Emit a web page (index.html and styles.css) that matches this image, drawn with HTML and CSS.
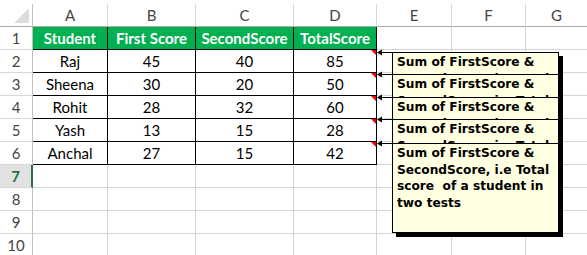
FILE: index.html
```html
<!DOCTYPE html>
<html>
<head>
<meta charset="utf-8">
<link rel="stylesheet" href="styles.css">
</head>
<body>
<div class="page">
  <div class="sheet">
    <div class="corner"><svg width="16" height="16" viewBox="0 0 16 16"><polygon points="16,0 16,16 0,16" fill="#dcdcdc"/></svg></div>
    <div class="colhead">A</div>
    <div class="colhead">B</div>
    <div class="colhead">C</div>
    <div class="colhead">D</div>
    <div class="colhead">E</div>
    <div class="colhead">F</div>
    <div class="colhead last">G</div>

    <div class="rowhead">1</div>
    <div class="cell t th">Student</div>
    <div class="cell t th">First Score</div>
    <div class="cell t th">SecondScore</div>
    <div class="cell t th">TotalScore</div>
    <div class="cell"></div><div class="cell"></div><div class="cell last"></div>

    <div class="rowhead">2</div>
    <div class="cell t">Raj</div>
    <div class="cell t">45</div>
    <div class="cell t">40</div>
    <div class="cell t note">85</div>
    <div class="cell"></div><div class="cell"></div><div class="cell last"></div>

    <div class="rowhead">3</div>
    <div class="cell t">Sheena</div>
    <div class="cell t">30</div>
    <div class="cell t">20</div>
    <div class="cell t note">50</div>
    <div class="cell"></div><div class="cell"></div><div class="cell last"></div>

    <div class="rowhead">4</div>
    <div class="cell t">Rohit</div>
    <div class="cell t">28</div>
    <div class="cell t">32</div>
    <div class="cell t note">60</div>
    <div class="cell"></div><div class="cell"></div><div class="cell last"></div>

    <div class="rowhead">5</div>
    <div class="cell t">Yash</div>
    <div class="cell t">13</div>
    <div class="cell t">15</div>
    <div class="cell t note">28</div>
    <div class="cell"></div><div class="cell"></div><div class="cell last"></div>

    <div class="rowhead">6</div>
    <div class="cell t">Anchal</div>
    <div class="cell t">27</div>
    <div class="cell t">15</div>
    <div class="cell t note">42</div>
    <div class="cell"></div><div class="cell"></div><div class="cell last"></div>

    <div class="rowhead active">7</div>
    <div class="cell"></div><div class="cell"></div><div class="cell"></div><div class="cell"></div>
    <div class="cell"></div><div class="cell"></div><div class="cell last"></div>

    <div class="rowhead">8</div>
    <div class="cell"></div><div class="cell"></div><div class="cell"></div><div class="cell"></div>
    <div class="cell"></div><div class="cell"></div><div class="cell last"></div>

    <div class="rowhead">9</div>
    <div class="cell"></div><div class="cell"></div><div class="cell"></div><div class="cell"></div>
    <div class="cell"></div><div class="cell"></div><div class="cell last"></div>

    <div class="rowhead">10</div>
    <div class="cell"></div><div class="cell"></div><div class="cell"></div><div class="cell"></div>
    <div class="cell"></div><div class="cell"></div><div class="cell last"></div>
  </div>

  <svg class="arrows" width="587" height="255" viewBox="0 0 587 255">
    <g fill="#000" stroke="#000" stroke-width="1">
      <line x1="382" y1="52.5" x2="393" y2="52.5"/>
      <polygon points="377,52.5 382,49.5 382,55.5" stroke="none"/>
      <line x1="382" y1="74.5" x2="393" y2="74.5"/>
      <polygon points="377,74.5 382,71.5 382,77.5" stroke="none"/>
      <line x1="382" y1="97.5" x2="393" y2="97.5"/>
      <polygon points="377,97.5 382,94.5 382,100.5" stroke="none"/>
      <line x1="382" y1="119.5" x2="393" y2="119.5"/>
      <polygon points="377,119.5 382,116.5 382,122.5" stroke="none"/>
      <line x1="382" y1="143.5" x2="393" y2="143.5"/>
      <polygon points="377,143.5 382,140.5 382,146.5" stroke="none"/>
    </g>
  </svg>

  <div class="comment c2">Sum of FirstScore &amp;<br>SecondScore, i.e Total<br>score&nbsp; of a student in<br>two tests</div>
  <div class="comment c3">Sum of FirstScore &amp;<br>SecondScore, i.e Total<br>score&nbsp; of a student in<br>two tests</div>
  <div class="comment c4">Sum of FirstScore &amp;<br>SecondScore, i.e Total<br>score&nbsp; of a student in<br>two tests</div>
  <div class="comment c5">Sum of FirstScore &amp;<br>SecondScore, i.e Total<br>score&nbsp; of a student in<br>two tests</div>
  <div class="comment c6">Sum of FirstScore &amp;<br>SecondScore, i.e Total<br>score&nbsp; of a student in<br>two tests</div>
</div>
</body>
</html>
```

FILE: styles.css
```css
* { box-sizing: border-box; }

html, body {
  margin: 0;
  padding: 0;
  background: #fff;
}

.page {
  position: relative;
  width: 587px;
  height: 255px;
  overflow: hidden;
  padding-top: 4px;
  font-family: Lato, "Liberation Sans", sans-serif;
}

.sheet {
  display: grid;
  grid-template-columns: 33px 75px 88px 98px 83px 75px 74px 1fr;
  grid-auto-rows: 23px;
}

.corner {
  border-right: 1px solid #bfbfbf;
  border-bottom: 1px solid #ababab;
  display: flex;
  align-items: flex-end;
  justify-content: flex-end;
  padding: 0 3px 3px 0;
}
.corner svg { display: block; width: 15px; height: 15px; }

.colhead {
  display: flex;
  align-items: center;
  justify-content: center;
  border-right: 1px solid #d8d8d8;
  border-bottom: 1px solid #ababab;
  color: #444;
  font-size: 15px;
}

.rowhead {
  display: flex;
  align-items: center;
  justify-content: center;
  border-right: 1px solid #bfbfbf;
  border-bottom: 1px solid #d8d8d8;
  color: #444;
  font-size: 15px;
}

.rowhead.active {
  background: #e1e1e1;
  color: #217346;
  font-weight: bold;
  border-right: 2px solid #217346;
}

.cell {
  position: relative;
  display: flex;
  align-items: center;
  justify-content: center;
  border-right: 1px solid #d4d4d4;
  border-bottom: 1px solid #d4d4d4;
  font-size: 15px;
  color: #000;
}

.last { border-right: none; }

.cell.t {
  border-right-color: #000;
  border-bottom-color: #000;
}

.cell.th {
  background: #00b050;
  color: #fff;
  font-weight: bold;
}

.cell.note::after {
  content: "";
  position: absolute;
  top: 0;
  right: 0;
  width: 0;
  height: 0;
  border-top: 5px solid #ff0000;
  border-left: 5px solid transparent;
}

.arrows {
  position: absolute;
  left: 0;
  top: 0;
  pointer-events: none;
}

.comment {
  position: absolute;
  left: 392px;
  width: 167px;
  height: 90px;
  overflow: hidden;
  background: #ffffe1;
  border: 1px solid #000;
  box-shadow: 4px 4px 0 #000;
  padding: 1px 2px 0 4px;
  font-family: "DejaVu Sans", sans-serif;
  font-weight: bold;
  font-size: 12.2px;
  line-height: 16.6px;
  color: #000;
  white-space: nowrap;
}

.c2 { top: 52px; }
.c3 { top: 74px; }
.c4 { top: 97px; }
.c5 { top: 119px; }
.c6 { top: 143px; }
```
